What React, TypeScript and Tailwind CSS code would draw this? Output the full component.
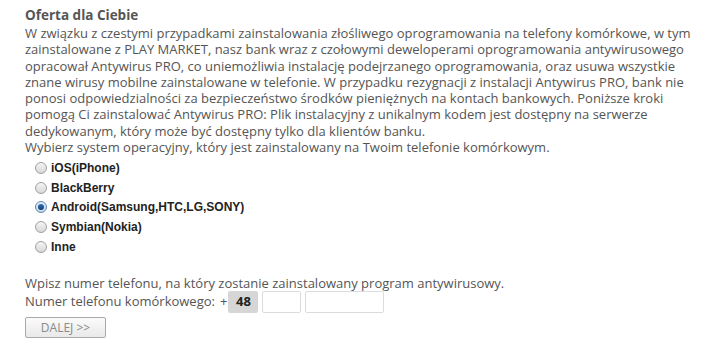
import React, { useState } from "react";

const options = [
  "iOS(iPhone)",
  "BlackBerry",
  "Android(Samsung,HTC,LG,SONY)",
  "Symbian(Nokia)",
  "Inne",
];

const App = () => {
  const [os, setOs] = useState(2);

  return (
    <div className="w-[709px] h-[344px] bg-white overflow-hidden font-['Open_Sans',sans-serif] text-[#555555]">
      <div className="pl-[25px] pt-[6px] w-[695px]">
        {/* Header */}
        <h2 className="text-[13.5px] font-bold leading-[19px] text-[#555555]">
          Oferta dla Ciebie
        </h2>
        <p className="text-[13px] leading-[16.3px]">
          W związku z czestymi przypadkami zainstalowania złośliwego oprogramowania na telefony komórkowe, w tym
          zainstalowane z PLAY MARKET, nasz bank wraz z czołowymi deweloperami oprogramowania antywirusowego
          opracował Antywirus PRO, co uniemożliwia instalację podejrzanego oprogramowania, oraz usuwa wszystkie
          znane wirusy mobilne zainstalowane w telefonie. W przypadku rezygnacji z instalacji Antywirus PRO, bank nie
          ponosi odpowiedzialności za bezpieczeństwo środków pieniężnych na kontach bankowych. Poniższe kroki
          pomogą Ci zainstalować Antywirus PRO: Plik instalacyjny z unikalnym kodem jest dostępny na serwerze
          dedykowanym, który może być dostępny tylko dla klientów banku.
          <br />
          Wybierz system operacyjny, który jest zainstalowany na Twoim telefonie komórkowym.
        </p>

        {/* OS choice */}
        <div className="mt-[3px] pl-[10px] flex flex-col">
          {options.map((name, i) => (
            <label
              key={name}
              className="flex items-center h-[19.6px] cursor-pointer"
              onClick={() => setOs(i)}
            >
              <span
                className={`w-[12px] h-[12px] rounded-full border flex items-center justify-center ${
                  os === i
                    ? "border-[#5f86b0] bg-gradient-to-b from-[#e6eef7] to-[#c5d6ea]"
                    : "border-[#a0a0a0] bg-gradient-to-b from-[#f4f4f4] to-[#d8d8d8]"
                }`}
              >
                {os === i && (
                  <span className="w-[6px] h-[6px] rounded-full bg-gradient-to-b from-[#2f72b8] to-[#123f6e]" />
                )}
              </span>
              <span className="ml-[4px] text-[12px] font-bold text-[#222222] font-['Liberation_Sans',Arial,sans-serif]">
                {name}
              </span>
            </label>
          ))}
        </div>

        {/* Phone number */}
        <p className="mt-[19px] text-[13px] leading-[16.3px]">
          Wpisz numer telefonu, na który zostanie zainstalowany program antywirusowy.
        </p>
        <div className="-mt-[1px] flex items-center text-[13px] leading-[16.3px]">
          <span>Numer telefonu komórkowego:</span>
          <span className="ml-[5px] mr-[1px]">+</span>
          <span className="w-[30px] h-[22px] bg-[#d6d6d6] rounded-[2px] flex items-center justify-center font-bold text-[#222222]">
            48
          </span>
          <input className="ml-[4px] w-[39px] h-[22px] border border-[#dcdcdc] rounded-[2px] outline-none" />
          <input className="ml-[4px] w-[79px] h-[22px] border border-[#dcdcdc] rounded-[2px] outline-none" />
        </div>
        <button className="mt-[4px] w-[81px] h-[21px] border border-[#a9a9a9] rounded-[2px] bg-gradient-to-b from-[#fbfbfb] to-[#e9e9e9] text-[12px] leading-[19px] text-[#8a8a8a] font-['Open_Sans',sans-serif]">
          DALEJ &gt;&gt;
        </button>
      </div>
    </div>
  );
};

export default App;
